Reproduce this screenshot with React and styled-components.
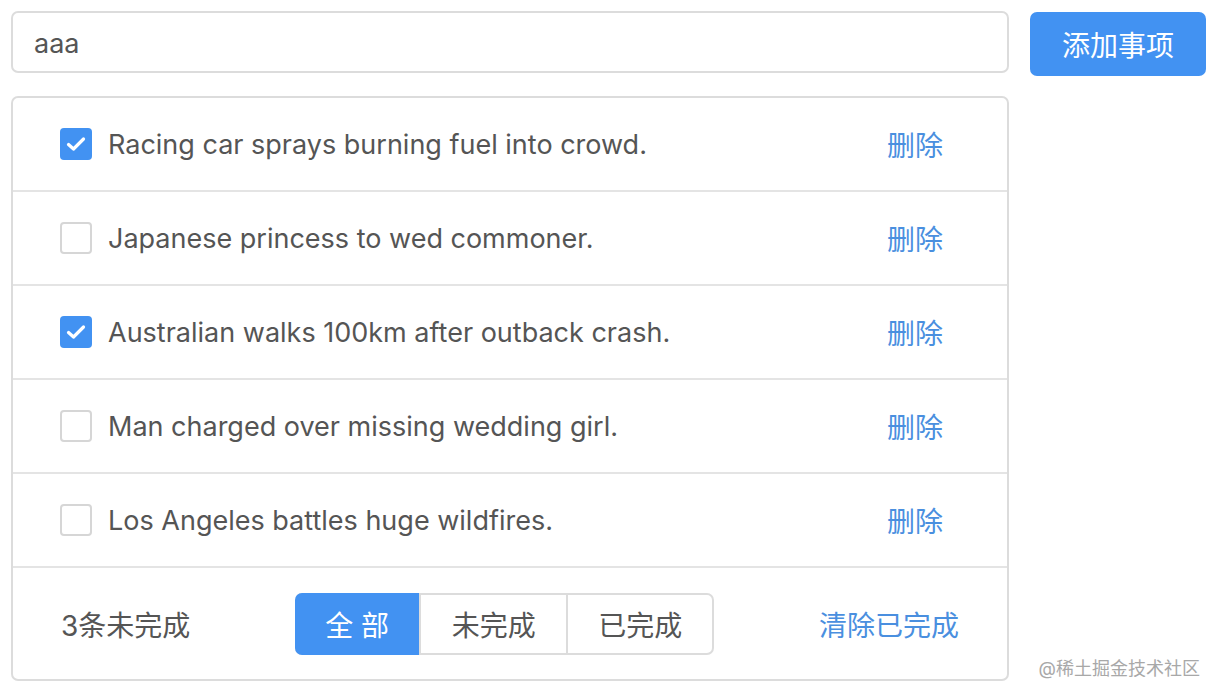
import React, { useState } from 'react';
import styled, { createGlobalStyle } from 'styled-components';

const Global = createGlobalStyle`
    body {
        margin: 0;
        background: #fff;
        font-family: Inter, "Noto Sans CJK SC", sans-serif;
        color: #555;
    }
`;

const Page = styled.div`
    position: relative;
    width: 1220px;
    height: 700px;
    padding: 11px;
    box-sizing: border-box;
`;

const Top = styled.div`
    display: flex;
    flex-direction: row;
    align-items: flex-start;
    gap: 21px;
`;

const Input = styled.input`
    width: 998px;
    height: 62px;
    box-sizing: border-box;
    border: 2px solid #dcdcdc;
    border-radius: 7px;
    padding: 2px 21px 0;
    font-family: inherit;
    font-size: 27px;
    color: #555;
    outline: none;
`;

const AddBtn = styled.button`
    width: 176px;
    height: 64px;
    margin-top: 1px;
    border: none;
    border-radius: 7px;
    background-color: #4292f2;
    color: white;
    font-family: inherit;
    font-size: 28px;
    cursor: pointer;
`;

const Card = styled.div`
    width: 998px;
    margin-top: 20px;
    box-sizing: border-box;
    border: 2px solid #dcdcdc;
    border-radius: 7px;
`;

const Row = styled.div`
    height: 94px;
    box-sizing: border-box;
    display: flex;
    flex-direction: row;
    align-items: center;
    padding: 0 64px 0 47px;
    border-bottom: 2px solid #e4e4e4;
`;

const Check = styled.span`
    width: 32px;
    height: 32px;
    box-sizing: border-box;
    border-radius: 4px;
    border: ${p => p.on ? 'none' : '2px solid #d6d6d6'};
    background-color: ${p => p.on ? '#4292f2' : '#fff'};
    display: flex;
    align-items: center;
    justify-content: center;
    cursor: pointer;
`;

const Title = styled.span`
    flex: 1;
    margin-left: 16px;
    font-size: 27px;
    color: #555;
`;

const Link = styled.a`
    color: #4a8fdf;
    font-size: 28px;
    cursor: pointer;
`;

const Foot = styled.div`
    height: 111px;
    display: flex;
    flex-direction: row;
    align-items: center;
    justify-content: space-between;
    padding: 0 48px;
`;

const Count = styled.span`
    font-size: 28px;
    color: #555;
`;

const Group = styled.div`
    display: flex;
    flex-direction: row;
    border: 2px solid #dcdcdc;
    border-radius: 7px;
    height: 62px;
    box-sizing: border-box;
`;

const Tab = styled.button`
    width: ${p => p.w}px;
    margin: -2px 0;
    height: 62px;
    border: none;
    border-left: ${p => p.first ? 'none' : '2px solid #dcdcdc'};
    border-radius: ${p => p.first ? '7px 0 0 7px' : '0'};
    margin-left: ${p => p.first ? '-2px' : '0'};
    background-color: ${p => p.active ? '#4292f2' : 'transparent'};
    color: ${p => p.active ? '#fff' : '#555'};
    font-family: inherit;
    font-size: 28px;
    cursor: pointer;
`;

const Mark = styled.div`
    position: absolute;
    right: 20px;
    bottom: 20px;
    font-size: 18px;
    color: #a8a8a8;
`;

const CheckIcon = () => (
    <svg width="24" height="24" viewBox="0 0 24 24">
        <path d="M4.5 12.5 L9.5 17 L19.5 7" fill="none" stroke="#fff" strokeWidth="3.2" strokeLinecap="round" strokeLinejoin="round" />
    </svg>
);

const items = [
    { text: 'Racing car sprays burning fuel into crowd.', done: true },
    { text: 'Japanese princess to wed commoner.', done: false },
    { text: 'Australian walks 100km after outback crash.', done: true },
    { text: 'Man charged over missing wedding girl.', done: false },
    { text: 'Los Angeles battles huge wildfires.', done: false },
];

const App = () => {
    const [list, setList] = useState(items);
    const left = list.filter(i => !i.done).length;

    return (
        <Page>
            <Global />
            <Top>
                <Input defaultValue="aaa" />
                <AddBtn>添加事项</AddBtn>
            </Top>
            <Card>
                {list.map((item, i) => (
                    <Row key={i}>
                        <Check on={item.done} onClick={() => setList(list.map((x, j) => j === i ? { ...x, done: !x.done } : x))}>
                            {item.done && <CheckIcon />}
                        </Check>
                        <Title>{item.text}</Title>
                        <Link>删除</Link>
                    </Row>
                ))}
                <Foot>
                    <Count>{left}条未完成</Count>
                    <Group>
                        <Tab first active w={124}>全 部</Tab>
                        <Tab w={147}>未完成</Tab>
                        <Tab w={146}>已完成</Tab>
                    </Group>
                    <Link>清除已完成</Link>
                </Foot>
            </Card>
            <Mark>@稀土掘金技术社区</Mark>
        </Page>
    );
};

export default App;
